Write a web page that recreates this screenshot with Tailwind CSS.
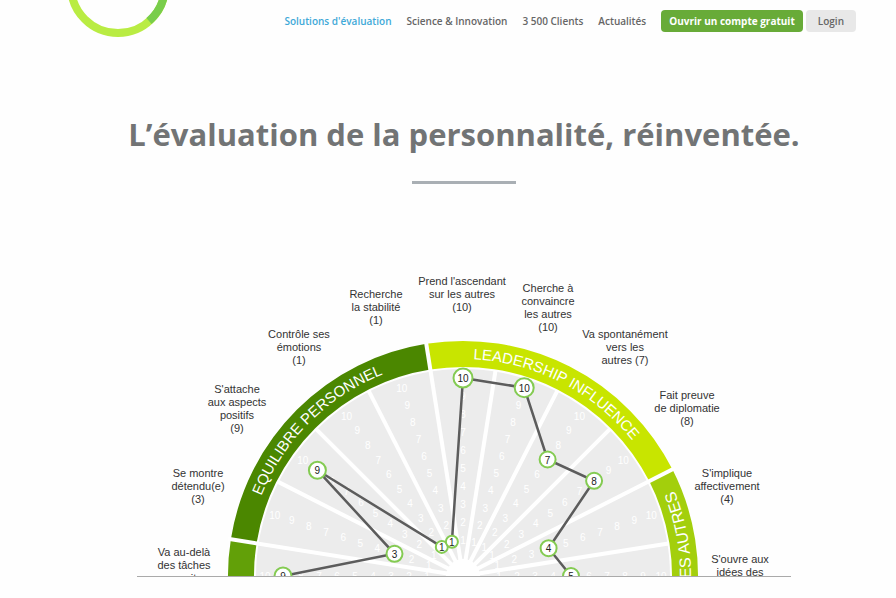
<!DOCTYPE html>
<html lang="fr">
<head>
    <meta charset="UTF-8">
    <meta name="viewport" content="width=device-width, initial-scale=1.0">
    <title>L’évaluation de la personnalité, réinventée.</title>
    <script src="https://cdn.jsdelivr.net/npm/@tailwindcss/browser@4"></script>
</head>
<body class="bg-[#fefefe] font-['Open_Sans',sans-serif]">
    <header class="flex items-start justify-between pl-[68px] pr-10">
        <a href="#" aria-label="Accueil">
            <svg class="w-[100px] h-[38px]" viewBox="68 0 100 38" fill="none" stroke-width="8">
                <circle cx="118" cy="-14" r="47" stroke="#b9ec43"/>
                <path d="M165 -14 A47 47 0 0 1 149 21" stroke="#79cd4b"/>
            </svg>
        </a>
        <nav class="flex items-center pt-[10px] text-[10px] leading-[22px] font-semibold text-[#666]">
            <div class="flex gap-[15px] mr-[15px]">
                <a href="#" class="text-[#3fa9d8]">Solutions d'évaluation</a>
                <a href="#">Science &amp; Innovation</a>
                <a href="#">3 500 Clients</a>
                <a href="#">Actualités</a>
            </div>
            <div class="flex gap-[3px]">
                <button class="bg-[#68ab38] text-white font-bold px-2 rounded">Ouvrir un compte gratuit</button>
                <button class="bg-[#e8e8e8] px-3 rounded">Login</button>
            </div>
        </nav>
    </header>

    <main class="pl-8 pt-[72px] flex flex-col items-center">
        <h1 class="text-[31px] leading-[48px] font-bold text-[#727475] whitespace-nowrap">L’évaluation de la personnalité, réinventée.</h1>
        <hr class="w-[104px] border-0 h-[3px] bg-[#a9afb4] mt-[23px]">

        <div class="w-full max-w-[654px] mt-[86px] border-b border-[#aaa]">
            <svg id="wheel" class="block w-full font-['Liberation_Sans',sans-serif]" viewBox="137 270 654 306" role="img" aria-label="Profil de personnalité"></svg>
        </div>
    </main>

    <script>
        const CX = 463, CY = 576;

        // angle in degrees, counterclockwise from the right
        function pt(r, deg) {
            const a = deg * Math.PI / 180;
            return [(CX + r * Math.cos(a)).toFixed(1), (CY - r * Math.sin(a)).toFixed(1)];
        }

        const bands = [
            { from: -9, to: 27, color: '#a3cf0c' },
            { from: 27, to: 99, color: '#c8e500' },
            { from: 99, to: 171, color: '#4b8700' },
            { from: 171, to: 189, color: '#62a008' }
        ];

        // x, y is the baseline of the first line
        const labels = [
            { x: 184, y: 556, lines: ['Va au-delà', 'des tâches', 'prescrites'] },
            { x: 198, y: 477, lines: ['Se montre', 'détendu(e)', '(3)'] },
            { x: 237, y: 393, lines: ["S'attache", 'aux aspects', 'positifs', '(9)'] },
            { x: 299, y: 338, lines: ['Contrôle ses', 'émotions', '(1)'] },
            { x: 376, y: 298, lines: ['Recherche', 'la stabilité', '(1)'] },
            { x: 462, y: 285, lines: ["Prend l'ascendant", 'sur les autres', '(10)'] },
            { x: 548, y: 292, lines: ['Cherche à', 'convaincre', 'les autres', '(10)'] },
            { x: 625, y: 338, lines: ['Va spontanément', 'vers les', 'autres (7)'] },
            { x: 687, y: 399, lines: ['Fait preuve', 'de diplomatie', '(8)'] },
            { x: 727, y: 477, lines: ["S'implique", 'affectivement', '(4)'] },
            { x: 740, y: 563, lines: ["S'ouvre aux", 'idées des'] }
        ];

        const scores = [9, 3, 9, 1, 1, 10, 10, 7, 8, 4, 5];
        const radius = n => 18 + 18 * n;
        const points = scores.map((n, i) => pt(radius(n), 180 - 18 * i));

        let svg = `<circle cx="${CX}" cy="${CY}" r="207" fill="#ececec"/>`;

        bands.forEach(b => {
            svg += `<path d="M${pt(222, b.from)} A222 222 0 0 0 ${pt(222, b.to)}" fill="none" stroke="${b.color}" stroke-width="26"/>`;
        });

        // thin spokes inside, wide ones between two bands
        for (let a = 9; a < 180; a += 18) {
            const wide = [27, 99, 171].includes(a);
            svg += `<path d="M${CX} ${CY} L${pt(wide ? 238 : 208, a)}" stroke="#fff" stroke-width="4"/>`;
        }
        svg += `<circle cx="${CX}" cy="${CY}" r="17" fill="#fff"/>`;

        // scale
        scores.forEach((s, i) => {
            for (let n = 1; n <= 10; n++) {
                if (n === s) continue;
                const [x, y] = pt(radius(n), 180 - 18 * i);
                svg += `<text x="${x}" y="${y}" dy="4" text-anchor="middle" font-size="10" fill="#fff">${n}</text>`;
            }
        });

        // band titles
        svg += `
            <path id="arcLeft" d="M${pt(217, 171)} A217 217 0 0 1 ${pt(217, 99)}" fill="none"/>
            <path id="arcTop" d="M${pt(217, 99)} A217 217 0 0 1 ${pt(217, 27)}" fill="none"/>
            <path id="arcRight" d="M${pt(228, -30)} A228 228 0 0 0 ${pt(228, 22)}" fill="none"/>
            <g font-size="15" fill="#fff">
                <text text-anchor="middle"><textPath href="#arcLeft" startOffset="50%">EQUILIBRE PERSONNEL</textPath></text>
                <text text-anchor="middle"><textPath href="#arcTop" startOffset="50%">LEADERSHIP INFLUENCE</textPath></text>
                <text text-anchor="end" font-size="16"><textPath href="#arcRight" startOffset="100%">LES AUTRES</textPath></text>
            </g>`;

        // profile
        svg += `<polyline points="${points.join(' ')}" fill="none" stroke="#5c5c5c" stroke-width="2.5"/>`;
        points.forEach(([x, y], i) => {
            const n = scores[i];
            const r = n === 1 ? 6 : n < 9 ? 8 : n === 9 ? 8.5 : 9.5;
            svg += `<circle cx="${x}" cy="${y}" r="${r}" fill="#fff" stroke="#84cb52" stroke-width="2"/>
                <text x="${x}" y="${y}" dy="4" text-anchor="middle" font-size="10" fill="#222">${n}</text>`;
        });

        labels.forEach(l => {
            svg += `<text text-anchor="middle" font-size="11" fill="#333">` +
                l.lines.map((t, i) => `<tspan x="${l.x}" y="${l.y + 13 * i}">${t}</tspan>`).join('') + `</text>`;
        });

        document.getElementById('wheel').innerHTML = svg;
    </script>
</body>
</html>
